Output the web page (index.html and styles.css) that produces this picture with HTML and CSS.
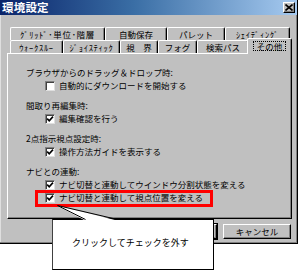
FILE: index.html
```html
<!DOCTYPE html>
<html lang="ja">
<head>
<meta charset="utf-8">
<title>環境設定</title>
<link rel="stylesheet" href="styles.css">
</head>
<body>
<div class="stage">
  <div class="dialog">
    <div class="titlebar">
      <span class="title">環境設定</span>
      <span class="close"><svg width="8" height="7" viewBox="0 0 8 7"><path d="M0.5,0.5 L7.5,6.5 M7.5,0.5 L0.5,6.5" stroke="#000" stroke-width="1.6" fill="none"/></svg></span>
    </div>
    <div class="tabs">
      <div class="row">
        <div class="tab w95 hw">ｸﾞﾘｯﾄﾞ･単位･階層</div>
        <div class="tab w62">自動保存</div>
        <div class="tab w58">パレット</div>
        <div class="tab w65 hw">ｼｪｲﾃﾞｨﾝｸﾞ</div>
      </div>
      <div class="row">
        <div class="tab w53 hw">ｳｫｰｸｽﾙｰ</div>
        <div class="tab w57 hw">ｼﾞｮｲｽﾃｨｯｸ</div>
        <div class="tab w38">視　界</div>
        <div class="tab w39">フォグ</div>
        <div class="tab w52">検索パス</div>
        <div class="tab w41 active"><span class="focus">その他</span></div>
      </div>
    </div>
    <div class="panel">
      <div class="group">
        <div class="heading">ブラウザからのドラッグ＆ドロップ時:</div>
        <div class="item"><span class="cb"></span><span>自動的にダウンロードを開始する</span></div>
      </div>
      <div class="group">
        <div class="heading">間取り再編集時:</div>
        <div class="item"><span class="cb"><svg width="8" height="8" viewBox="0 0 8 8"><path d="M1.2,3.6 L3.2,5.8 L7,1.6" stroke="#000" stroke-width="1.6" fill="none"/></svg></span><span>編集確認を行う</span></div>
      </div>
      <div class="group">
        <div class="heading">2点指示視点設定時:</div>
        <div class="item"><span class="cb"><svg width="8" height="8" viewBox="0 0 8 8"><path d="M1.2,3.6 L3.2,5.8 L7,1.6" stroke="#000" stroke-width="1.6" fill="none"/></svg></span><span>操作方法ガイドを表示する</span></div>
      </div>
      <div class="group">
        <div class="heading">ナビとの連動:</div>
        <div class="item"><span class="cb"><svg width="8" height="8" viewBox="0 0 8 8"><path d="M1.2,3.6 L3.2,5.8 L7,1.6" stroke="#000" stroke-width="1.6" fill="none"/></svg></span><span>ナビ切替と連動してウインドウ分割状態を変える</span></div>
        <div class="item"><span class="cb"><svg width="8" height="8" viewBox="0 0 8 8"><path d="M1.2,3.6 L3.2,5.8 L7,1.6" stroke="#000" stroke-width="1.6" fill="none"/></svg></span><span>ナビ切替と連動して視点位置を変える</span></div>
      </div>
    </div>
    <div class="buttons">
      <button class="btn default">OK</button>
      <button class="btn">キャンセル</button>
    </div>
  </div>
  <div class="redbox"></div>
  <div class="callout">クリックしてチェックを外す</div>
  <svg class="pointer" width="300" height="271" viewBox="0 0 300 271">
    <polygon points="85,220.5 57,205.5 117,220.5" fill="#fff"/>
    <polyline points="85.5,219.5 57.5,205.5 117.5,219.5" fill="none" stroke="#000" stroke-width="1"/>
  </svg>
</div>
</body>
</html>
```

FILE: styles.css
```css
* { box-sizing: border-box; margin: 0; padding: 0; }
html, body { width: 300px; height: 271px; background: #fff; overflow: hidden; }
body {
  font-family: "Noto Sans CJK JP", "Noto Sans", sans-serif;
  font-size: 8.5px;
  color: #000;
}
.stage { position: relative; width: 300px; height: 271px; }

.dialog {
  width: 298px;
  height: 244px;
  background: #c0c0c0;
  border-right: 1px solid #000;
  border-bottom: 1px solid #000;
  box-shadow: inset -1px -1px #808080, inset 1px 0 #dfdfdf;
  display: flex;
  flex-direction: column;
}

.titlebar {
  height: 15px;
  background: linear-gradient(90deg, #0a246a 0%, #3a6ea5 45%, #a6caf0 100%);
  display: flex;
  align-items: center;
  justify-content: space-between;
  padding: 0 2px 0 2px;
}
.title {
  color: #fff;
  font-weight: bold;
  font-size: 11.5px;
  line-height: 15px;
  letter-spacing: 0.2px;
}
.close {
  width: 12px;
  height: 11px;
  background: #c0c0c0;
  border: 1px solid;
  border-color: #fff #000 #000 #fff;
  box-shadow: inset -1px -1px #808080;
  display: flex;
  align-items: center;
  justify-content: center;
}
.close svg { display: block; }

.tabs { margin: 12px 0 0 10px; width: 280px; }
.row { display: flex; height: 13px; }
.tab {
  height: 13px;
  border-top: 1px solid #fff;
  border-left: 1px solid #fff;
  border-right: 1px solid #000;
  box-shadow: inset -1px 0 #808080;
  border-radius: 2px 2px 0 0;
  display: flex;
  align-items: center;
  justify-content: center;
  white-space: nowrap;
  line-height: 1;
  font-size: 8.5px;
  background: #c0c0c0;
}
.tab.hw { letter-spacing: 0.7px; }
.w95 { width: 95px; }
.w62 { width: 62px; }
.w58 { width: 58px; }
.w65 { width: 65px; }
.w53 { width: 53px; }
.w57 { width: 57px; }
.w38 { width: 38px; }
.w39 { width: 39px; }
.w52 { width: 52px; }
.w41 { width: 41px; }
.tab.active {
  position: relative;
  z-index: 1;
  margin: -2px -2px -1px -2px;
  height: 16px;
  width: 45px;
  padding-bottom: 1px;
}
.focus {
  border: 1px dotted #000;
  padding: 0 3px;
  line-height: 1;
}

.panel {
  margin-left: 7px;
  width: 285px;
  height: 166px;
  border: 1px solid;
  border-color: #fff #000 #000 #fff;
  box-shadow: inset -1px -1px #808080;
  padding: 12px 0 0 18px;
}
.group { margin-bottom: 7px; }
.heading, .item { height: 13px; line-height: 13px; white-space: nowrap; }
.item {
  display: flex;
  align-items: center;
  gap: 4px;
  padding-left: 19px;
}
.cb {
  width: 10px;
  height: 10px;
  flex: none;
  background: #fff;
  border: 1px solid;
  border-color: #808080 #dfdfdf #dfdfdf #808080;
  box-shadow: inset 1px 1px #404040;
  display: flex;
  align-items: center;
  justify-content: center;
}
.cb svg { display: block; }

.buttons {
  display: flex;
  justify-content: flex-end;
  gap: 6px;
  margin: 5px 6px 0 0;
}
.btn {
  width: 68px;
  height: 15px;
  font: inherit;
  color: #000;
  background: #c0c0c0;
  border: 1px solid;
  border-color: #fff #000 #000 #fff;
  box-shadow: inset -1px -1px #808080;
  line-height: 1;
}
.btn.default { outline: 1px solid #000; }

.redbox {
  position: absolute;
  left: 35px;
  top: 190px;
  width: 178px;
  height: 17px;
  border: 3px solid #f00;
}
.callout {
  position: absolute;
  left: 52px;
  top: 219px;
  width: 162px;
  height: 51px;
  background: #fff;
  border: 1px solid #000;
  border-left-color: #404040;
  padding: 17px 0 0 19px;
  font-size: 9px;
  line-height: 12px;
  white-space: nowrap;
}
.pointer { position: absolute; left: 0; top: 0; pointer-events: none; }
```
